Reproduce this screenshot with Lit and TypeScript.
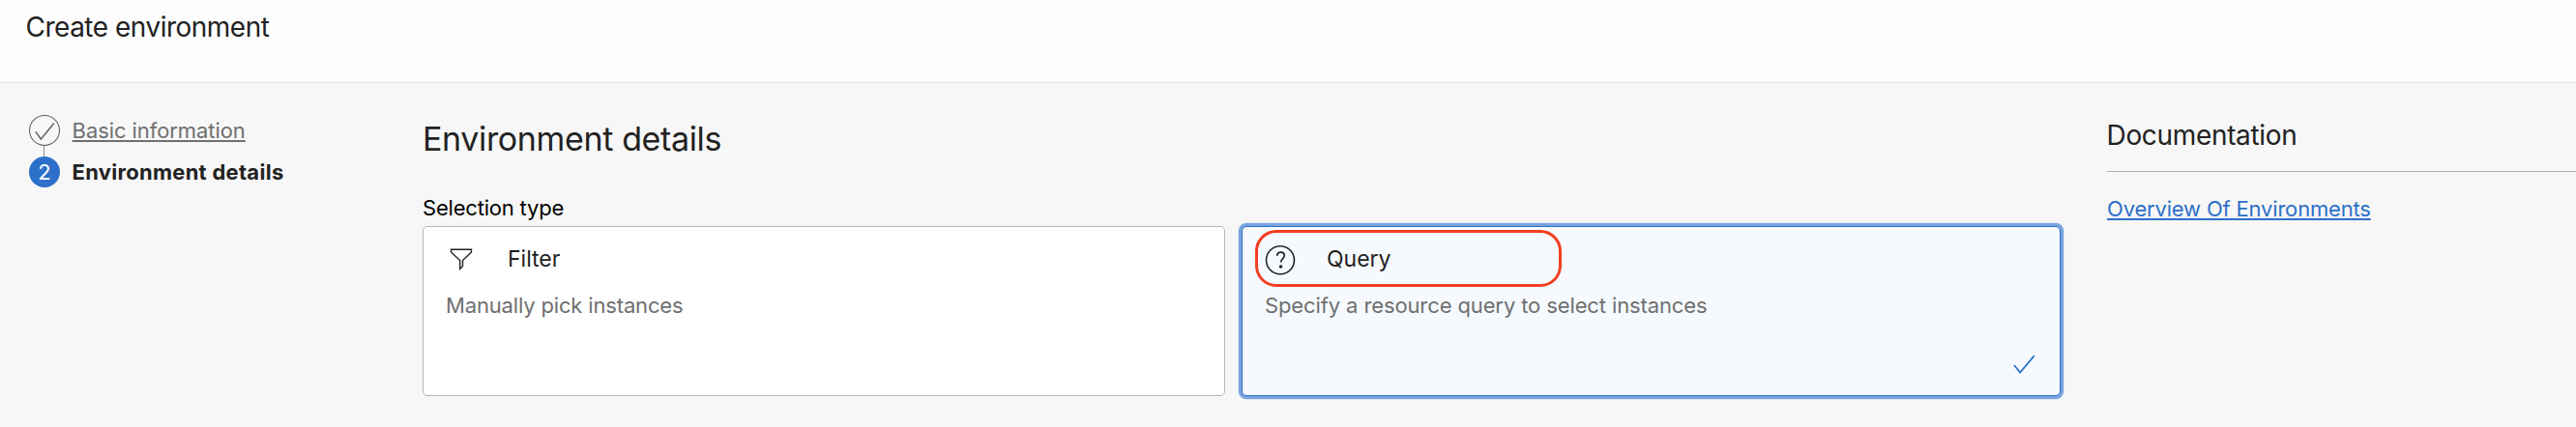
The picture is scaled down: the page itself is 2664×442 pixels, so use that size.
import { LitElement, html, css, svg } from "lit";
import { customElement, property } from "lit/decorators.js";

@customElement("step-item")
class StepItem extends LitElement {
  @property() label = "";
  @property({ type: Number }) index = 1;
  @property({ type: Boolean }) done = false;

  static styles = css`
    :host { display: block; }
    .row { display: flex; align-items: center; gap: 12.6px; height: 32px; line-height: 32px; font-size: 22px; }
    .mark { width: 32px; height: 32px; flex: none; }
    .badge { background: #2c70c9; color: #fff; border-radius: 50%; text-align: center; }
    .past { color: #6f6f6f; letter-spacing: -0.08px; text-decoration: underline; text-decoration-thickness: 2px; text-underline-offset: 2px; text-decoration-skip-ink: none; }
    .current { color: #222; font-weight: 700; letter-spacing: 0.27px; }
  `;

  render() {
    return this.done
      ? html`<div class="row">
          <svg class="mark" viewBox="0 0 32 32" fill="none" stroke="#666">
            <circle cx="16" cy="16" r="15.5" stroke-width="1.1" />
            <path d="M6.8 17.4 12.4 25 25.8 8.6" stroke-width="1.6" />
          </svg>
          <span class="past">${this.label}</span>
        </div>`
      : html`<div class="row">
          <span class="mark badge">${this.index}</span>
          <span class="current">${this.label}</span>
        </div>`;
  }
}

const funnelIcon = svg`<path d="M6.5 6.3H27.5V8.9L18.5 17.6V23.4L15.7 26.2V17.6L6.5 8.9Z" stroke-width="1.4" />`;
const questionIcon = svg`
  <circle cx="17" cy="17.2" r="14.5" stroke-width="1.6" />
  <path d="M13.7 12.9C13.8 10.4 15.4 9.2 17.5 9.2C19.7 9.2 21.3 10.6 21.3 12.6C21.3 15.5 17.6 15.8 17.6 19.6" stroke-width="1.7" />
  <circle cx="17.6" cy="24" r="1.8" fill="#222" stroke="none" />`;

@customElement("choice-card")
class ChoiceCard extends LitElement {
  @property() heading = "";
  @property() note = "";
  @property() icon = "filter";
  @property({ type: Boolean }) selected = false;

  static styles = css`
    :host { display: block; }
    .card { position: relative; box-sizing: border-box; height: 176px; padding: 17px 22px; border: 1px solid #b5b5bc; border-radius: 5px; background: #fff; }
    .selected { border-color: #2c70c9; background: #f6faff; box-shadow: 0 0 0 3px #7aa4de, 0 0 0 4px #dde6f3; }
    .title { display: flex; align-items: center; gap: 33px; height: 32px; font-size: 23px; line-height: 32px; color: #1f1f1f; }
    .icon { width: 32px; height: 32px; flex: none; overflow: visible; }
    .note { margin-top: 16px; padding-left: 1px; font-size: 22px; line-height: 32px; color: #6f6f6f; letter-spacing: -0.16px; }
    .selected .note { letter-spacing: -0.115px; }
    .tick { position: absolute; right: 23px; bottom: 20px; width: 26px; height: 24px; }
    .highlight { position: absolute; left: 13px; top: 3px; box-sizing: border-box; width: 317px; height: 59px; border: 3px solid #f03e22; border-radius: 22px; }
  `;

  render() {
    return html`<div class="card ${this.selected ? "selected" : ""}">
      <div class="title">
        <svg class="icon" viewBox="0 0 32 32" fill="none" stroke="#222">
          ${this.icon === "filter" ? funnelIcon : questionIcon}
        </svg>
        <span>${this.heading}</span>
      </div>
      <div class="note">${this.note}</div>
      ${this.selected
        ? html`<svg class="tick" viewBox="0 0 26 24" fill="none" stroke="#2c70c9" stroke-width="1.7">
              <path d="M2 13 8.1 20.6 22.8 3.1" />
            </svg>
            <div class="highlight"></div>`
        : ""}
    </div>`;
  }
}

@customElement("app-root")
class AppRoot extends LitElement {
  static styles = css`
    :host { display: block; height: 442px; overflow: hidden; background: #f7f7f7; color: #222; font-family: Inter, "Liberation Sans", sans-serif; }
    header { box-sizing: border-box; height: 86px; padding-left: 26.5px; background: #fdfdfd; border-bottom: 1px solid #e2e2e2; font-size: 28px; line-height: 56px; letter-spacing: -0.5px; }
    main { display: grid; grid-template-columns: 437px 1694px 1fr; height: 356px; }
    nav { padding: 33px 0 0 30px; }
    .link-line { width: 1px; height: 11px; margin-left: 15px; background: #909090; }
    section { padding-top: 38px; }
    h1 { margin: 0 0 32px; font-size: 34px; font-weight: 400; line-height: 40px; letter-spacing: -0.36px; }
    .label { font-size: 22px; line-height: 38px; color: #000; letter-spacing: -0.2px; }
    .cards { display: grid; grid-template-columns: 830px 847px; column-gap: 17px; }
    aside { padding: 34px 0 0 48px; }
    h2 { margin: 0; padding-bottom: 17px; border-bottom: 1px solid #b5b5bc; font-size: 28px; font-weight: 400; line-height: 40px; letter-spacing: -0.33px; text-indent: -0.5px; }
    a { display: inline-block; margin-top: 22px; font-size: 22px; line-height: 32px; color: #2c70c9; letter-spacing: -0.18px; text-decoration: underline; text-decoration-thickness: 2px; text-underline-offset: 2px; text-decoration-skip-ink: none; }
  `;

  render() {
    return html`
      <header>Create environment</header>
      <main>
        <nav>
          <step-item done label="Basic information"></step-item>
          <div class="link-line"></div>
          <step-item index="2" label="Environment details"></step-item>
        </nav>
        <section>
          <h1>Environment details</h1>
          <div class="label">Selection type</div>
          <div class="cards">
            <choice-card icon="filter" heading="Filter" note="Manually pick instances"></choice-card>
            <choice-card selected icon="query" heading="Query" note="Specify a resource query to select instances"></choice-card>
          </div>
        </section>
        <aside>
          <h2>Documentation</h2>
          <a href="#">Overview Of Environments</a>
        </aside>
      </main>
    `;
  }
}
